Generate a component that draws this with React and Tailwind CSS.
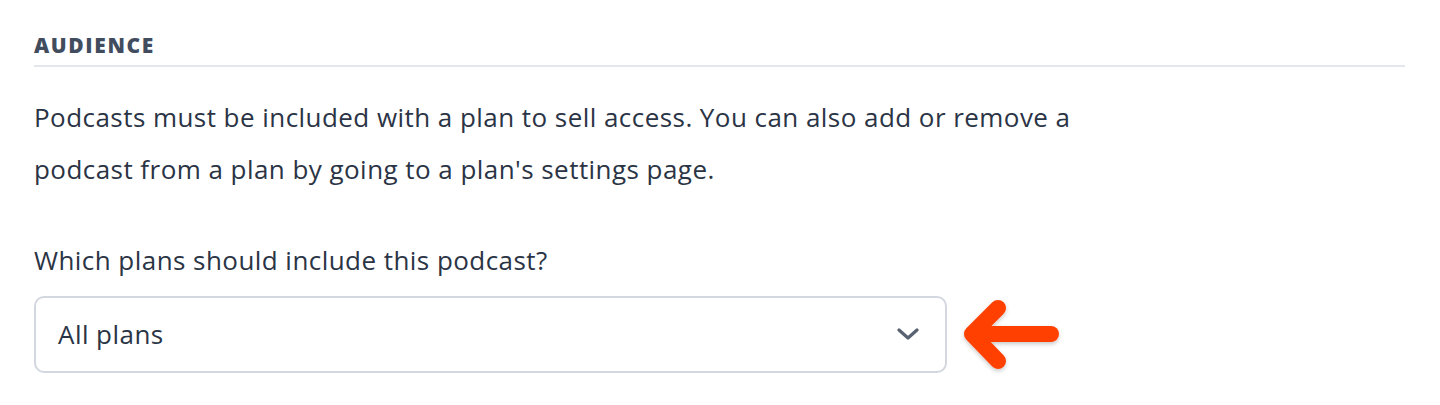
export default function App() {
  return (
    <div className="w-[1440px] h-[405px] bg-white px-[34px] pt-[32px]" style={{ fontFamily: "'Open Sans', Lato, sans-serif" }}>
      <div className="w-[1371px]">
        <div className="text-[21px] font-extrabold tracking-[1.6px] text-[#414d5f] leading-[26px] pb-[7px] border-b-2 border-[#e3e6ec]">AUDIENCE</div>
        <p className="mt-[24px] text-[26px] tracking-[0.45px] leading-[52px] text-[#2b3445]">
          Podcasts must be included with a plan to sell access. You can also add or remove a
          <br />
          podcast from a plan by going to a plan's settings page.
        </p>
        <div className="mt-[49px] text-[26px] tracking-[0.45px] leading-[32px] text-[#2b3445]">Which plans should include this podcast?</div>
        <div className="mt-[18px] flex items-center gap-[9px]">
          <div className="w-[913px] h-[77px] rounded-[10px] border-2 border-[#d3d7df] flex items-center justify-between pl-[22px] pr-[26px] text-[26px] tracking-[0.45px] text-[#2b3445]">
            <span>All plans</span>
            <svg width="22" height="14" viewBox="0 0 22 14" fill="none">
              <path d="M2 3 L11 11 L20 3" stroke="#596273" strokeWidth="3.2" strokeLinecap="round" strokeLinejoin="round" />
            </svg>
          </div>
          <svg width="110" height="80" viewBox="0 0 110 80">
            <defs>
              <filter id="sh" x="-20%" y="-20%" width="140%" height="150%">
                <feDropShadow dx="0" dy="2" stdDeviation="2" floodColor="#000" floodOpacity="0.22" />
              </filter>
            </defs>
            <g filter="url(#sh)" stroke="#ff4000" strokeWidth="16" strokeLinecap="round" strokeLinejoin="round" fill="none">
              <path d="M17 40 L95 40" />
              <path d="M42 14 L16 40 L42 67" />
            </g>
          </svg>
        </div>
      </div>
    </div>
  );
}
